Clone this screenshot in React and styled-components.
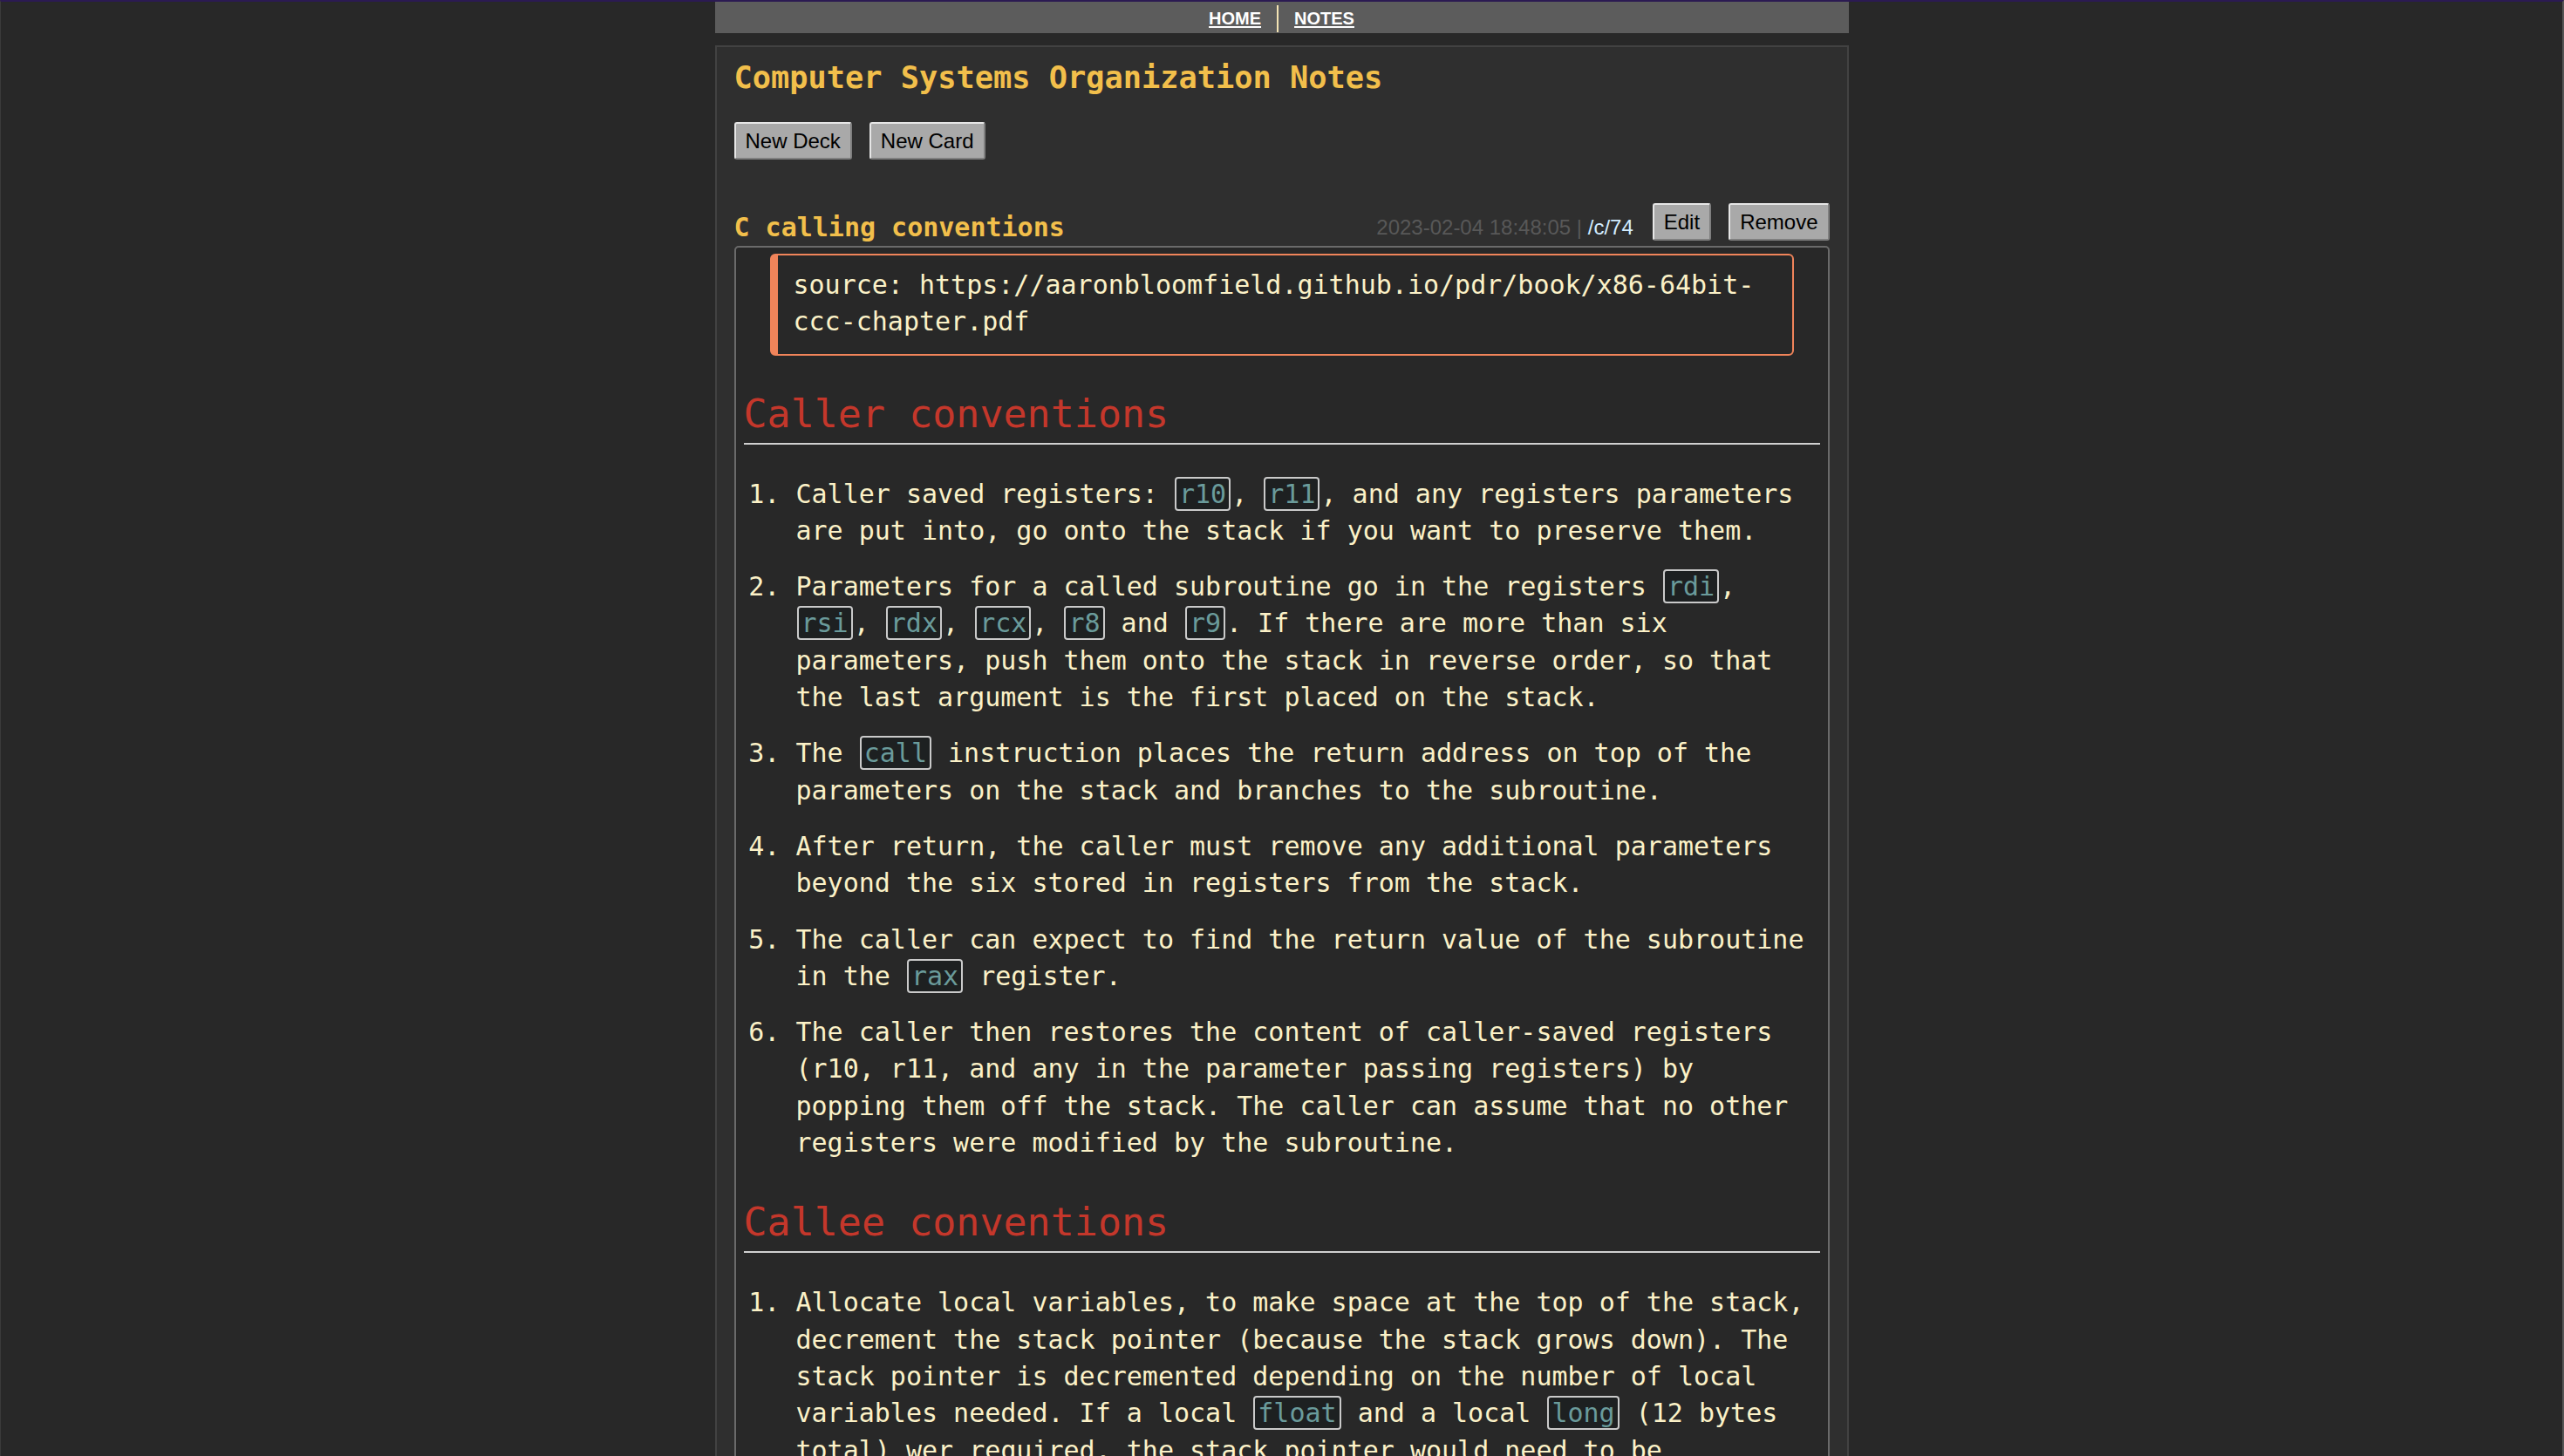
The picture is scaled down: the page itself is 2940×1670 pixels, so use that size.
import styled, { createGlobalStyle } from "styled-components";

const GlobalStyle = createGlobalStyle`
  html {
    background: #282828;
  }
  body {
    margin: 0;
    min-height: 100vh;
    box-sizing: border-box;
    background: #282828;
    border-top: 2px solid #2b1a52;
    border-left: 1px solid #3a3a3a;
    border-right: 2px solid #555555;
    font-family: "DejaVu Sans Mono", monospace;
    color: #fbf1c7;
  }
`;

const NavBar = styled.nav`
  width: 1300px;
  height: 36px;
  margin: 0 auto;
  background: #5c5c5c;
  display: flex;
  justify-content: center;
  align-items: flex-start;
  gap: 18px;
  box-sizing: border-box;
  padding-top: 4px;
`;

const NavLink = styled.a`
  font-family: "Liberation Sans", Arial, sans-serif;
  font-weight: bold;
  font-size: 20px;
  line-height: 23px;
  margin-top: 4px;
  color: #ffffff;
  text-decoration: underline;
  text-underline-offset: 2px;
  cursor: pointer;
`;

const NavDivider = styled.span`
  width: 2px;
  height: 31px;
  background: #f3e3b3;
`;

const Panel = styled.main`
  width: 1300px;
  margin: 14px auto 0;
  box-sizing: border-box;
  background: #2f2f2f;
  border: 2px solid #424242;
  border-bottom: none;
  padding: 14px 20px 40px;
`;

const DeckTitle = styled.h1`
  margin: 0;
  font-size: 35.3px;
  line-height: 42px;
  font-weight: bold;
  color: #f2bf4b;
`;

const ButtonRow = styled.div`
  display: flex;
  gap: 20px;
  margin-top: 30px;
`;

const Button = styled.button`
  font-family: "Liberation Sans", Arial, sans-serif;
  font-size: 24px;
  line-height: 29px;
  color: #000000;
  background: #a9a9a9;
  padding: 5px 11px;
  border: 2px solid;
  border-color: #e6e6e6 #7f7f7f #7f7f7f #e6e6e6;
  border-radius: 3px;
  cursor: pointer;
`;

const Card = styled.section`
  margin-top: 50px;
`;

const CardHeader = styled.header`
  display: flex;
  justify-content: space-between;
  align-items: flex-end;
`;

const CardTitle = styled.h3`
  margin: 0;
  font-size: 30px;
  line-height: 35px;
  font-weight: bold;
  color: #f2bf4b;
`;

const CardTools = styled.div`
  display: flex;
  align-items: flex-end;
  gap: 20px;
  margin-bottom: 2px;
`;

const CardMeta = styled.span`
  font-family: "Liberation Sans", Arial, sans-serif;
  font-size: 24px;
  line-height: 30px;
  color: #585858;
  margin-right: 2px;
`;

const CardLink = styled.a`
  color: #d2ecff;
  text-decoration: none;
`;

const CardBody = styled.div`
  margin-top: 4px;
  background: #282828;
  border: 2px solid #6a6a6a;
  border-radius: 5px;
  padding: 7px 9px 0;
  font-size: 30px;
  line-height: 42.3px;
`;

const Quote = styled.blockquote`
  margin: 0 30px 40px;
  padding: 13px 18px 15px;
  border: 2px solid #f0845a;
  border-left-width: 9px;
  border-radius: 6px;
  color: #fbf1c7;
`;

const SectionHeading = styled.h2`
  margin: 0 0 36px;
  font-size: 45px;
  line-height: 54px;
  font-weight: normal;
  color: #c4372b;
  padding-bottom: 6px;
  border-bottom: 2px solid #d0d0d0;
`;

const StepList = styled.ol`
  margin: 0 0 43px;
  padding: 0 10px 0 60px;
  color: #fbf1c7;
`;

const Step = styled.li`
  & + & {
    margin-top: 22px;
  }
`;

const Code = styled.code`
  font-family: "DejaVu Sans Mono", monospace;
  font-size: 30px;
  color: #6a9b9b;
  background: #1d2021;
  border: 2px solid #cacaca;
  border-radius: 4px;
  padding: 0 3px;
  margin: 0 1px;
`;

const callerSteps = [
  <>
    Caller saved registers: <Code>r10</Code>, <Code>r11</Code>, and any
    registers parameters are put into, go onto the stack if you want to
    preserve them.
  </>,
  <>
    Parameters for a called subroutine go in the registers <Code>rdi</Code>,{" "}
    <Code>rsi</Code>, <Code>rdx</Code>, <Code>rcx</Code>, <Code>r8</Code> and{" "}
    <Code>r9</Code>. If there are more than six parameters, push them onto the
    stack in reverse order, so that the last argument is the first placed on
    the stack.
  </>,
  <>
    The <Code>call</Code> instruction places the return address on top of the
    parameters on the stack and branches to the subroutine.
  </>,
  <>
    After return, the caller must remove any additional parameters beyond the
    six stored in registers from the stack.
  </>,
  <>
    The caller can expect to find the return value of the subroutine in the{" "}
    <Code>rax</Code> register.
  </>,
  <>
    The caller then restores the content of caller-saved registers (r10, r11,
    and any in the parameter passing registers) by popping them off the stack.
    The caller can assume that no other registers were modified by the
    subroutine.
  </>,
];

const calleeSteps = [
  <>
    Allocate local variables, to make space at the top of the stack, decrement
    the stack pointer (because the stack grows down). The stack pointer is
    decremented depending on the number of local variables needed. If a local{" "}
    <Code>float</Code> and a local <Code>long</Code> (12 bytes total) wer
    required, the stack pointer would need to be decremented by 12.
  </>,
  <>
    Save the values of the callee-saved registers that will be used by the
    subroutine by pushing them onto the stack.
  </>,
];

export default function App() {
  return (
    <>
      <GlobalStyle />
      <NavBar>
        <NavLink>HOME</NavLink>
        <NavDivider />
        <NavLink>NOTES</NavLink>
      </NavBar>
      <Panel>
        <DeckTitle>Computer Systems Organization Notes</DeckTitle>
        <ButtonRow>
          <Button>New Deck</Button>
          <Button>New Card</Button>
        </ButtonRow>

        <Card>
          <CardHeader>
            <CardTitle>C calling conventions</CardTitle>
            <CardTools>
              <CardMeta>
                2023-02-04 18:48:05 | <CardLink>/c/74</CardLink>
              </CardMeta>
              <Button>Edit</Button>
              <Button>Remove</Button>
            </CardTools>
          </CardHeader>
          <CardBody>
            <Quote>
              source: https://aaronbloomfield.github.io/pdr/book/x86-64bit-ccc-chapter.pdf
            </Quote>

            <SectionHeading>Caller conventions</SectionHeading>
            <StepList>
              {callerSteps.map((step, i) => (
                <Step key={i}>{step}</Step>
              ))}
            </StepList>

            <SectionHeading>Callee conventions</SectionHeading>
            <StepList>
              {calleeSteps.map((step, i) => (
                <Step key={i}>{step}</Step>
              ))}
            </StepList>
          </CardBody>
        </Card>
      </Panel>
    </>
  );
}
